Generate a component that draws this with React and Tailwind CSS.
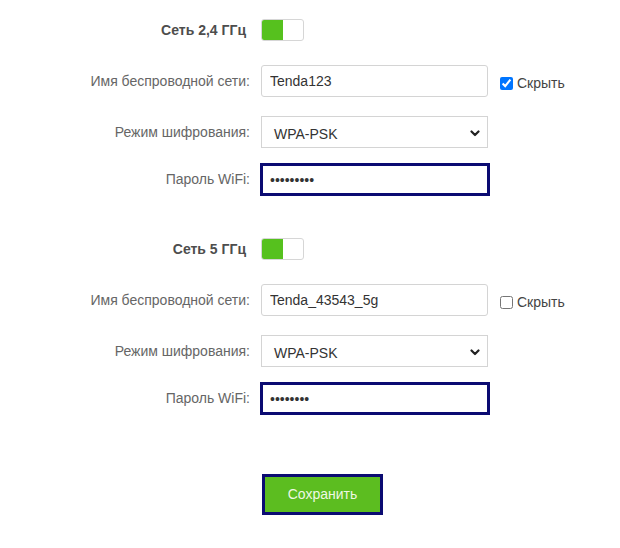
import React from "react";

function Toggle() {
  return (
    <div className="flex h-[22px] w-[43px] overflow-hidden rounded-[3px] border border-[#d6d6d6] bg-white">
      <div className="h-full w-[21px] bg-[#56c11e]" />
    </div>
  );
}

function Chevron() {
  return (
    <svg width="10" height="7" viewBox="0 0 10 7" className="absolute right-[7px] top-[13px]">
      <path d="M1.5 1.5 L5 5 L8.5 1.5" fill="none" stroke="#222" strokeWidth="2.2" strokeLinecap="round" strokeLinejoin="round" />
    </svg>
  );
}

function Section({ title, ssid, hidden, dots, mt }) {
  return (
    <div className={mt}>
      <div className="flex h-[32px] items-center">
        <div className="w-[250px] pr-[4px] text-right text-[14px] font-bold text-[#4d4d4d]">{title}</div>
        <div className="ml-[11px]">
          <Toggle />
        </div>
      </div>

      <div className="mt-[19px] flex h-[32px] items-center">
        <div className="w-[250px] text-right text-[14px] text-[#666]">Имя беспроводной сети:</div>
        <input
          readOnly
          defaultValue={ssid}
          className="ml-[11px] h-[32px] w-[227px] rounded-[3px] border border-[#d4d4d4] bg-white px-[8px] text-[14px] text-[#333] outline-none"
        />
        <label className="ml-[12px] mt-[4px] flex items-center text-[14px] text-[#444]">
          <input type="checkbox" defaultChecked={hidden} className="h-[13px] w-[13px] accent-[#0075ff]" />
          <span className="ml-[4px]">Скрыть</span>
        </label>
      </div>

      <div className="mt-[19px] flex h-[32px] items-center">
        <div className="w-[250px] text-right text-[14px] text-[#666]">Режим шифрования:</div>
        <div className="relative ml-[11px] h-[32px] w-[227px] border border-[#d4d4d4] bg-white">
          <div className="pl-[12px] pt-[7px] text-[14px] text-[#333]">WPA-PSK</div>
          <Chevron />
        </div>
      </div>

      <div className="mt-[15px] flex h-[33px] items-center">
        <div className="w-[250px] text-right text-[14px] text-[#666]">Пароль WiFi:</div>
        <input
          type="password"
          readOnly
          defaultValue={dots}
          className="ml-[10px] h-[33px] w-[230px] border-[3px] border-[#0b0b72] bg-white px-[7px] text-[14px] text-[#333] outline-none"
        />
      </div>
    </div>
  );
}

export default function App() {
  return (
    <div className="h-[548px] w-[620px] bg-white pt-[14px] font-['Liberation_Sans',Arial,sans-serif]">
      <Section title="Сеть 2,4 ГГц" ssid="Tenda123" hidden={true} dots="123456789" mt="" />
      <Section title="Сеть 5 ГГц" ssid="Tenda_43543_5g" hidden={false} dots="12345678" mt="mt-[37px]" />
      <div className="mt-[59px] flex">
        <button className="ml-[262px] h-[41px] w-[121px] border-[3px] border-[#0b0b72] bg-[#5cbd20] text-[14px] text-[#eef8e4]">
          Сохранить
        </button>
      </div>
    </div>
  );
}
